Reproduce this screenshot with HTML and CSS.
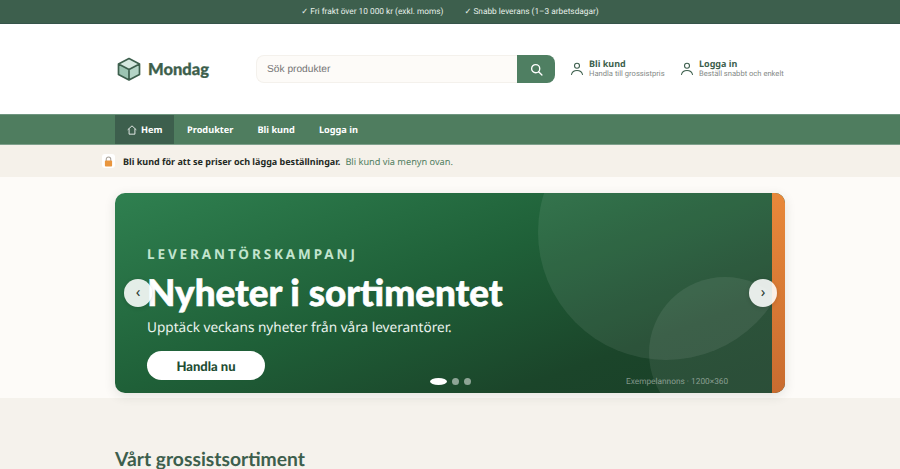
FILE: index.html
```html
<!DOCTYPE html>
<html lang="sv">
<head>
<meta charset="utf-8">
<title>Mondag</title>
<link rel="stylesheet" href="styles.css">
</head>
<body>
<div class="topbar">
  <span>✓ Fri frakt över 10 000 kr (exkl. moms)</span>
  <span>✓ Snabb leverans (1–3 arbetsdagar)</span>
</div>
<header class="header">
  <div class="container header-row">
    <a class="logo">
      <svg class="logo-icon" viewBox="0 0 24 24" width="24" height="24">
        <path d="M12 1.500 22.500 7 12 12.500 1.500 7Z" fill="#d5e8df"/>
        <path d="M1.500 7v10.500L12 23V12.500Z" fill="#9cc4b2"/>
        <path d="M22.500 7v10.500L12 23V12.500Z" fill="#b4d4c6"/>
        <path d="M12 1.500 22.500 7v10.500L12 23 1.500 17.500V7ZM1.500 7 12 12.500 22.500 7M12 12.500V23" fill="none" stroke="#3d5f4d" stroke-width="1.700" stroke-linejoin="round"/>
      </svg>
      <span class="logo-text">Mondag</span>
    </a>
    <form class="search">
      <div class="search-input">Sök produkter</div>
      <div class="search-btn">
        <svg viewBox="0 0 24 24" width="13" height="13" fill="none" stroke="#fff" stroke-width="2.500" stroke-linecap="round"><circle cx="10.500" cy="10.500" r="7.500"/><path d="m16 16 6 6"/></svg>
      </div>
    </form>
    <a class="account acc-first">
      <svg viewBox="0 0 14 14" width="14" height="14" fill="none" stroke="#3d5f4d" stroke-width="1.100" stroke-linecap="round"><circle cx="7" cy="3.800" r="2.500"/><path d="M1.500 12.500c.6-2.700 2.700-4 5.500-4s4.900 1.300 5.500 4"/></svg>
      <span class="acc-text"><b>Bli kund</b><small>Handla till grossistpris</small></span>
    </a>
    <a class="account">
      <svg viewBox="0 0 14 14" width="14" height="14" fill="none" stroke="#3d5f4d" stroke-width="1.100" stroke-linecap="round"><circle cx="7" cy="3.800" r="2.500"/><path d="M1.500 12.500c.6-2.700 2.700-4 5.500-4s4.900 1.300 5.500 4"/></svg>
      <span class="acc-text"><b>Logga in</b><small>Beställ snabbt och enkelt</small></span>
    </a>
  </div>
</header>
<nav class="nav">
  <div class="container nav-row">
    <a class="nav-item active">
      <svg class="home-icon" viewBox="0 0 12 12" width="10" height="10" fill="none" stroke="#fff" stroke-width="1" stroke-linejoin="round"><path d="M.8 5.800 6 1l5.200 4.800M2.500 4.500V11h7V4.500"/></svg>
      Hem</a>
    <a class="nav-item">Produkter</a>
    <a class="nav-item">Bli kund</a>
    <a class="nav-item">Logga in</a>
  </div>
</nav>
<div class="notice">
  <span class="lock">
    <svg viewBox="0 0 10 12" width="9" height="11"><path d="M2.500 5.500V3.500a2.500 2.500 0 0 1 5 0v2" fill="none" stroke="#a8a29a" stroke-width="1.200"/><rect x="1" y="5" width="8" height="6.500" rx="1" fill="#e9963e"/></svg>
  </span>
  <strong>Bli kund för att se priser och lägga beställningar.</strong>
  <span class="notice-link">Bli kund via menyn ovan.</span>
</div>
<section class="hero-section">
  <div class="hero">
    <div class="circle c1"></div>
    <div class="circle c2"></div>
    <div class="stripe"></div>
    <div class="hero-content">
      <div class="eyebrow">LEVERANTÖRSKAMPANJ</div>
      <h1>Nyheter i sortimentet</h1>
      <p>Upptäck veckans nyheter från våra leverantörer.</p>
      <a class="cta">Handla nu</a>
    </div>
    <div class="arrow prev">‹</div>
    <div class="arrow next">›</div>
    <div class="dots"><i class="dot on"></i><i class="dot"></i><i class="dot"></i></div>
    <div class="caption">Exempelannons · 1200×360</div>
  </div>
</section>
<section class="range">
  <h2>Vårt grossistsortiment</h2>
</section>
</body>
</html>
```
FILE: styles.css
```css
* { box-sizing: border-box; }
html, body { margin: 0; height: 469px; overflow: hidden; }
body { font-family: "Noto Sans", "Open Sans", sans-serif; background: #f5f2ec; color: #1f2a24; text-rendering: geometricPrecision; }
a { color: inherit; text-decoration: none; }

.container { width: 670px; margin: 0 auto; }

.topbar {
  height: 24px;
  background: #3d5f4d;
  border-bottom: 1px solid #35544a;
  color: #e6efe9;
  font-family: Roboto, sans-serif;
  font-size: 8.300px;
  display: flex;
  justify-content: center;
  align-items: center;
  gap: 21px;
}

.header { height: 90px; background: #fff; }
.header-row { height: 90px; display: flex; align-items: center; }
.logo { display: flex; align-items: center; gap: 7px; width: 141px; flex-shrink: 0; padding-left: 2px; }
.logo-icon { width: 24px; height: 24px; }
.logo-text { font-family: Lato, sans-serif; font-size: 16.500px; font-weight: 900; color: #3d5f4d; line-height: 1; -webkit-text-stroke: .3px #3d5f4d; }

.search { display: flex; width: 299px; height: 28px; flex-shrink: 0; }
.search-input {
  flex: 1;
  background: #fdfbf8;
  border: 1px solid #f4f1ec;
  border-right: 0;
  border-radius: 8px 0 0 8px;
  font-family: "Liberation Sans", sans-serif;
  font-size: 10.200px;
  color: #757575;
  padding-left: 10px;
  display: flex;
  align-items: center;
}
.search-btn {
  width: 38px;
  background: #4f7f62;
  border-radius: 0 8px 8px 0;
  display: flex;
  align-items: center;
  justify-content: center;
}

.account { display: flex; align-items: center; gap: 5px; white-space: nowrap; }
.acc-first { margin-left: 15px; width: 110px; flex-shrink: 0; }
.acc-text { display: flex; flex-direction: column; line-height: 10px; }
.acc-text b { font-size: 9px; font-weight: 700; color: #3d5f4d; }
.acc-text small { font-family: Roboto, sans-serif; font-size: 7.600px; color: #858a87; }

.nav { height: 31px; background: #4f7d5f; border-top: 1px solid #6f9680; border-bottom: 1px solid #7fa08c; }
.nav-row { display: flex; height: 29px; }
.nav-item { display: flex; align-items: center; gap: 4px; padding: 0 12px; color: #fff; font-size: 9.200px; font-weight: 700; }
.nav-item.active { background: #3d5f4d; width: 59px; margin-right: 1px; padding-right: 0; }
.home-icon { flex-shrink: 0; }

.notice {
  height: 32px;
  background: #f5f1ea;
  display: flex;
  align-items: center;
  padding-left: 102px;
  font-size: 9px;
  gap: 5px;
}
.lock { width: 13px; height: 14px; background: #fff; border-radius: 3px; display: flex; align-items: center; justify-content: center; margin-right: 3px; }
.notice strong { font-weight: 700; color: #1f2a24; }
.notice-link { color: #4f7d5f; font-size: 9.200px; }

.hero-section { height: 221px; background: #fdfbf8; padding-top: 16px; }
.hero {
  position: relative;
  width: 670px;
  height: 200px;
  margin: 0 auto;
  border-radius: 10px;
  overflow: hidden;
  background: linear-gradient(160deg, #2f8050 0%, #1f6038 45%, #1b452a 77%, #1a3f28 100%);
  box-shadow: 0 3px 12px rgba(40, 50, 40, .12);
}
.circle { position: absolute; border-radius: 50%; background: rgba(255, 255, 255, .08); }
.c1 { left: 423px; top: -89px; width: 256px; height: 256px; }
.c2 { left: 534px; top: 84px; width: 152px; height: 152px; }
.stripe { position: absolute; right: 0; top: 0; bottom: 0; width: 13px; background: linear-gradient(180deg, #e8883a, #c96c30); }

.hero-content { position: relative; padding: 52px 0 0 32px; color: #fff; }
.eyebrow { font-size: 13.500px; font-weight: 700; letter-spacing: 2.900px; color: #c2e4ce; line-height: 18px; }
h1 { margin: 7px 0 0; font-family: Lato, sans-serif; font-size: 36.800px; line-height: 44px; font-weight: 900; color: #fff; -webkit-text-stroke: .6px #fff; }
.hero-content p { margin: 3px 0 0; font-size: 13.600px; line-height: 20px; color: #eaf3ed; }
.cta {
  margin-top: 14px;
  display: flex;
  width: 118px;
  height: 29px;
  border-radius: 15px;
  background: #fff;
  color: #1f4d33;
  font-family: Lato, sans-serif;
  font-size: 13px;
  font-weight: 900;
  align-items: center;
  justify-content: center;
}

.arrow {
  position: absolute;
  top: 86px;
  width: 28px;
  height: 28px;
  border-radius: 50%;
  background: rgba(255, 255, 255, .88);
  color: #2b3a31;
  font-size: 15px;
  line-height: 27px;
  text-align: center;
  box-shadow: 0 1px 4px rgba(0, 0, 0, .15);
}
.prev { left: 9px; }
.next { left: 634px; }

.dots { position: absolute; left: 315px; top: 185px; display: flex; gap: 5px; align-items: center; }
.dot { width: 7px; height: 7px; border-radius: 50%; background: rgba(255, 255, 255, .5); }
.dot.on { width: 17px; height: 7px; background: #fff; }

.caption { position: absolute; left: 511px; top: 183px; font-family: Roboto, sans-serif; font-size: 8.300px; line-height: 12px; color: rgba(255, 255, 255, .45); }

.range { padding: 48px 0 0; width: 670px; margin: 0 auto; }
h2 { margin: 0; font-family: Lato, sans-serif; font-size: 19.300px; line-height: 28px; font-weight: 700; color: #3d5f4d; }
```
